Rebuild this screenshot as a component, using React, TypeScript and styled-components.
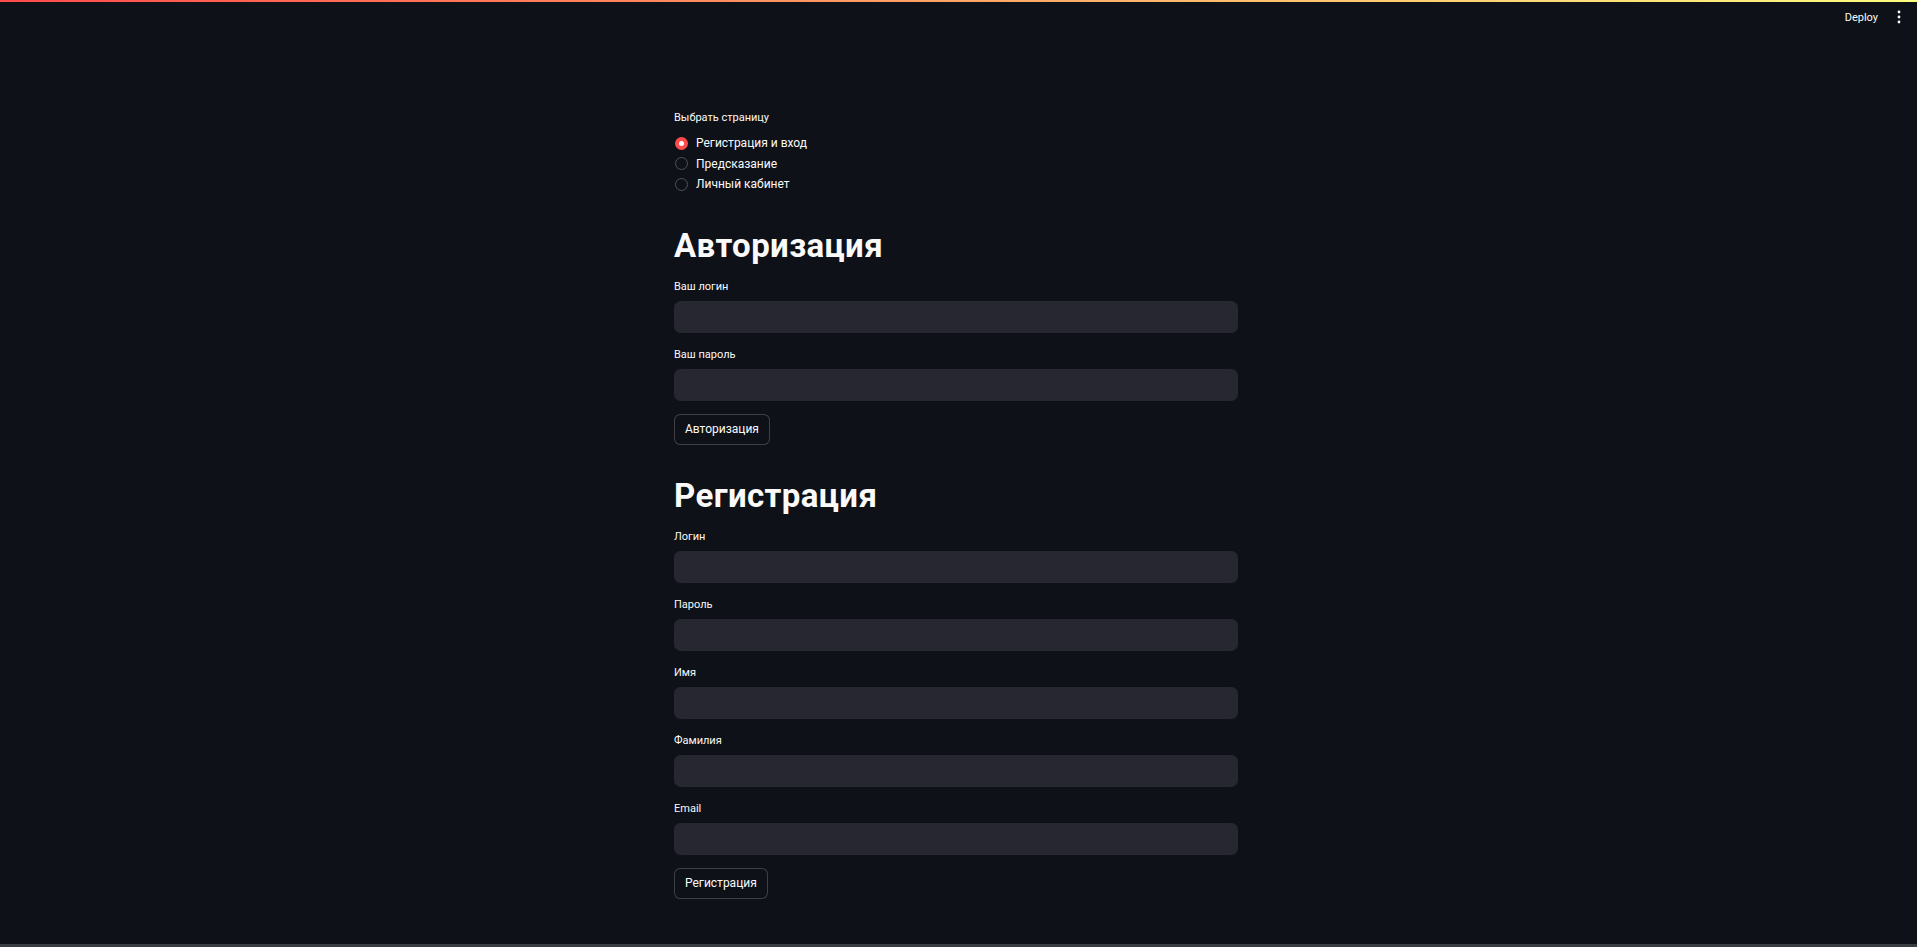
import React from "react";
import styled, { createGlobalStyle } from "styled-components";

const GlobalStyle = createGlobalStyle`
  html, body {
    margin: 0;
    padding: 0;
    height: 100%;
    background: #0e1117;
    overflow: hidden;
  }
  #root { height: 100%; }
  * { box-sizing: border-box; }
`;

const AppShell = styled.div`
  height: 100vh;
  display: flex;
  flex-direction: column;
  background: #0e1117;
  color: #fafafa;
  font-family: Roboto, "Noto Sans", sans-serif;
`;

const Decoration = styled.div`
  height: 2px;
  flex: none;
  background: linear-gradient(90deg, #ff4b4b, #fffd80);
`;

const Header = styled.header`
  height: 30px;
  flex: none;
  display: flex;
  align-items: center;
  justify-content: flex-end;
  gap: 18px;
  padding-right: 15px;
`;

const DeployButton = styled.button`
  background: transparent;
  border: none;
  color: #fafafa;
  font-family: inherit;
  font-size: 11px;
  font-weight: 400;
  padding: 0;
  cursor: pointer;
`;

const MenuButton = styled.button`
  background: transparent;
  border: none;
  padding: 0;
  width: 6px;
  height: 14px;
  display: flex;
  align-items: center;
  justify-content: center;
  cursor: pointer;
`;

const Main = styled.main`
  flex: 1;
  overflow: hidden;
  padding: 77px 5px 0 0;
`;

const Column = styled.div`
  width: 564px;
  margin: 0 auto;
  display: flex;
  flex-direction: column;
  gap: 13px;
`;

const Footer = styled.div`
  height: 3px;
  flex: none;
  background: #3a3c44;
`;

const RadioGroup = styled.div`
  display: flex;
  flex-direction: column;
`;

const WidgetLabel = styled.div`
  font-size: 11px;
  font-weight: 400;
  line-height: 18px;
  color: #fafafa;
`;

const RadioList = styled.div`
  display: flex;
  flex-direction: column;
  margin-top: 6px;
`;

const RadioOption = styled.label`
  display: flex;
  align-items: center;
  gap: 8px;
  height: 20.5px;
  font-size: 12px;
  color: #fafafa;
  cursor: pointer;
  padding-left: 1px;
`;

const RadioCircle = styled.span<{ $checked: boolean }>`
  width: 13px;
  height: 13px;
  border-radius: 50%;
  flex: none;
  display: flex;
  align-items: center;
  justify-content: center;
  background: ${(p) => (p.$checked ? "#ff4b4b" : "#0e1117")};
  border: ${(p) => (p.$checked ? "none" : "1.5px solid #51535b")};
  &::after {
    content: "";
    width: 5px;
    height: 5px;
    border-radius: 50%;
    background: #ffffff;
    display: ${(p) => (p.$checked ? "block" : "none")};
  }
`;

const Heading = styled.h1`
  margin: 18px 0 -0.5px;
  font-size: 33px;
  line-height: 1.2;
  font-weight: 700;
  letter-spacing: 0.4px;
  color: #fafafa;
`;

const Field = styled.div`
  display: flex;
  flex-direction: column;
`;

const FieldLabel = styled(WidgetLabel)`
  margin-bottom: 5px;
`;

const Input = styled.input`
  height: 32px;
  width: 100%;
  background: #262730;
  border: 1px solid #262730;
  border-radius: 6.4px;
  color: #fafafa;
  font-family: inherit;
  font-size: 12px;
  padding: 0 10px;
  outline: none;
`;

const ActionButton = styled.button`
  align-self: flex-start;
  height: 31px;
  padding: 0 10px;
  background: #0e1117;
  border: 1px solid rgba(250, 250, 250, 0.2);
  border-radius: 6.4px;
  color: #fafafa;
  font-family: inherit;
  font-size: 12px;
  font-weight: 400;
  cursor: pointer;
`;

const pages = ["Регистрация и вход", "Предсказание", "Личный кабинет"];

const TextField = ({ label, type = "text" }: { label: string; type?: string }) => (
  <Field>
    <FieldLabel>{label}</FieldLabel>
    <Input type={type} aria-label={label} />
  </Field>
);

export default function App() {
  return (
    <AppShell>
      <GlobalStyle />
      <Decoration />
      <Header>
        <DeployButton>Deploy</DeployButton>
        <MenuButton aria-label="menu">
          <svg width="4" height="14" viewBox="0 0 4 14">
            <circle cx="2" cy="2" r="1.4" fill="#fafafa" />
            <circle cx="2" cy="7" r="1.4" fill="#fafafa" />
            <circle cx="2" cy="12" r="1.4" fill="#fafafa" />
          </svg>
        </MenuButton>
      </Header>
      <Main>
        <Column>
          <RadioGroup>
            <WidgetLabel>Выбрать страницу</WidgetLabel>
            <RadioList>
              {pages.map((p, i) => (
                <RadioOption key={p}>
                  <RadioCircle $checked={i === 0} />
                  {p}
                </RadioOption>
              ))}
            </RadioList>
          </RadioGroup>

          <Heading>Авторизация</Heading>
          <TextField label="Ваш логин" />
          <TextField label="Ваш пароль" type="password" />
          <ActionButton>Авторизация</ActionButton>

          <Heading>Регистрация</Heading>
          <TextField label="Логин" />
          <TextField label="Пароль" type="password" />
          <TextField label="Имя" />
          <TextField label="Фамилия" />
          <TextField label="Email" />
          <ActionButton>Регистрация</ActionButton>
        </Column>
      </Main>
      <Footer />
    </AppShell>
  );
}
